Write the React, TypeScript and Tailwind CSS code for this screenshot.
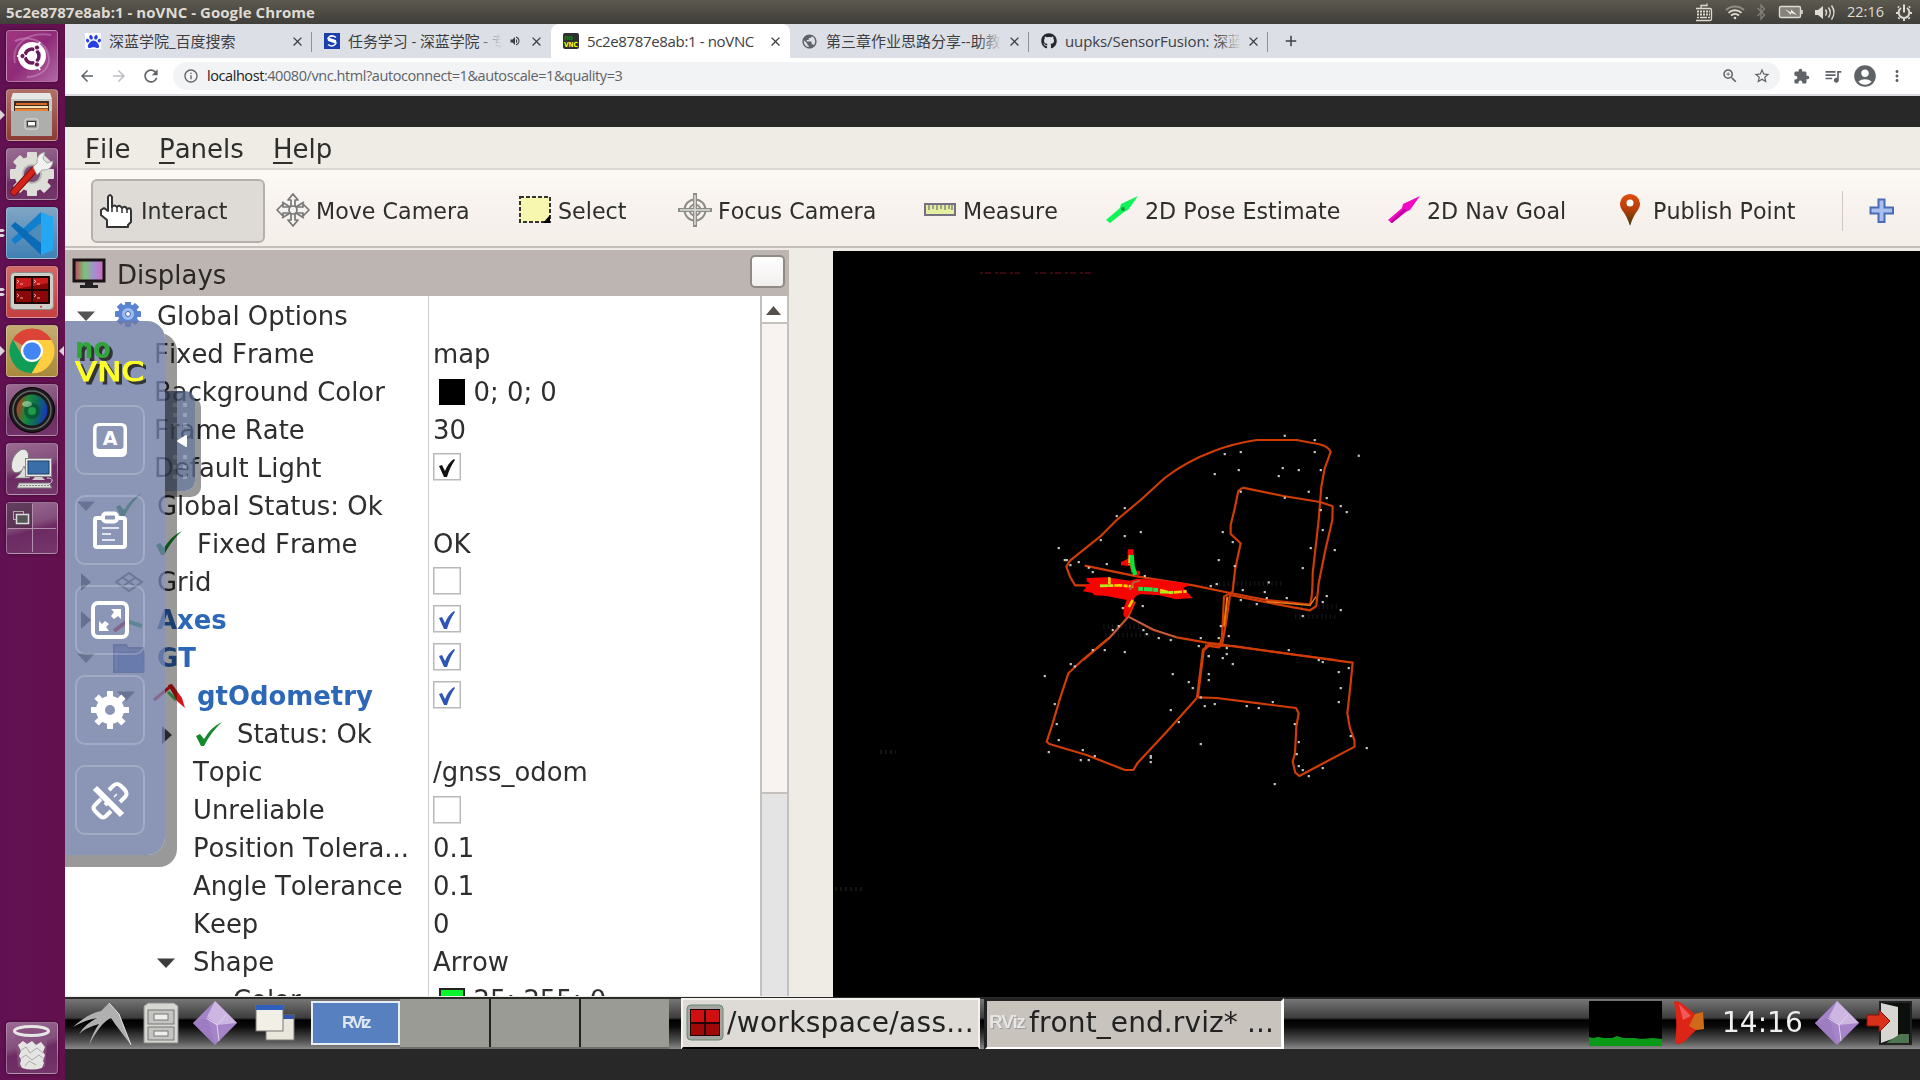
import React from "react";
import {
  MdArrowBack, MdArrowForward, MdRefresh, MdInfoOutline, MdZoomIn, MdStarBorder, MdExtension,
  MdQueueMusic, MdAccountCircle, MdMoreVert, MdClose, MdAdd, MdVolumeUp, MdPublic,
} from "react-icons/md";
import { FaGithub, FaPaw } from "react-icons/fa";

/* ---------- top panel ---------- */

function TopPanel() {
  return (
    <div className="flex h-6 shrink-0 items-center bg-gradient-to-b from-[#5c594f] to-[#3f3e39] pl-1.5 text-[#dfdbd2]">
      <span className="w-[1690px] whitespace-nowrap text-[15px] font-bold tracking-[0.05px]">5c2e8787e8ab:1 - noVNC - Google Chrome</span>
      <svg className="shrink-0" width="218" height="24" viewBox="0 0 218 24" fill="none" stroke="#dfdbd2">
        <g transform="translate(-1 0)">
          <path d="M6 8V5.500h6V3.500" strokeWidth="1.300" />
          <rect x="-.5" y="8.500" width="17" height="12" rx="1.500" strokeWidth="1.300" />
          <path d="M2 11.500h13M2 14.500h13" strokeWidth="2" strokeDasharray="2 1" />
          <path d="M2 17.500h13" strokeWidth="1.500" strokeDasharray="2 1 7 1 2 1" />
        </g>
        <path d="M30 10a13 13 0 0 1 18 0" strokeWidth="2" stroke="#8f8c84" />
        <path d="M32.500 12.800a9.500 9.500 0 0 1 13 0M35 15.500a6 6 0 0 1 8 0" strokeWidth="1.800" />
        <circle cx="39" cy="18" r="1.300" fill="#dfdbd2" stroke="none" />
        <path d="M61.500 8l7 7-3.500 4V5l3.500 4-7 7" stroke="#85827a" strokeWidth="1.300" />
        <rect x="83.500" y="6.500" width="21" height="11" rx="1.500" fill="#85827a" strokeWidth="1.400" />
        <path d="M106 10v4" strokeWidth="1.600" />
        <path d="M89 9l6 3.500 0-3 6 5.500-6-2 0 2z" fill="#eee" stroke="none" />
        <path d="M119 10h3l5-4v13l-5-4h-3z" fill="#dfdbd2" stroke="none" />
        <path d="M129.500 9.500q2 3 0 6M132.500 7.500q3.500 5 0 10M135.500 5.500q5 7 0 14" strokeWidth="1.400" />
        <g transform="translate(208 12.500)">
          <path d="M-3 -4.500a5.400 5.400 0 1 0 6 0" strokeWidth="2" />
          <path d="M0 -8v8" strokeWidth="2" />
          <path d="M-5 -5l-1 -1M5 -5l1 -1M-6 .5h-2M6 .5h2M-4.500 5l-1.200 1.200M4.500 5l1.200 1.200M0 6.500v2" strokeWidth="2" />
        </g>
      </svg>
      <span className="-ml-[67px] text-[14.500px]">22:16</span>
    </div>
  );
}

/* ---------- launcher ---------- */

type TileProps = { bg: string; left?: 0 | 1 | 2; right?: boolean; children: React.ReactNode };

function Tile({ bg, left = 0, right, children }: TileProps) {
  return (
    <div className="flex h-[52px] w-[65px] shrink-0 items-center">
      <svg width="6" height="20" viewBox="0 0 6 20" fill="#dcd3da">
        {left === 1 && <path d="M0 5l5 5-5 5z" />}
        {left === 2 && <path d="M0 6h3l2 1.500-2 1.500H0zM0 11h3l2 1.500-2 1.500H0z" />}
      </svg>
      <div className={"flex h-[52px] w-[52px] items-center justify-center rounded border border-white/30 shadow-[0_0_3px_rgba(0,0,0,0.5)] " + bg}>
        <svg width="50" height="50" viewBox="0 0 50 50">{children}</svg>
      </div>
      {right && (
        <svg width="7" height="10" viewBox="0 0 7 10" fill="#dcd3da"><path d="M6 0v10L1 5z" /></svg>
      )}
    </div>
  );
}

const plain = "bg-[linear-gradient(165deg,#9a6b93_0%,#84507c_42%,#6c2a62_55%,#74376b_100%)]";

function Launcher() {
  return (
    <div className="flex w-[65px] shrink-0 flex-col gap-[7px] bg-gradient-to-r from-[#611152] to-[#64104f] pt-1.5">
      <Tile bg="bg-gradient-to-br from-[#a0377f] via-[#8f2a78] to-[#b068a4]">
        <path d="M8 10C20 4 40 8 42 28C42 40 30 46 20 46" fill="none" stroke="#c68bbb" strokeWidth="2" opacity=".6" />
        <path d="M44 4C20 0 4 14 8 32" fill="none" stroke="#c68bbb" strokeWidth="2" opacity=".5" />
        <circle cx="25" cy="25" r="14" fill="#fff" />
        <circle cx="25" cy="25" r="7" fill="none" stroke="#6b1a5b" strokeWidth="3.500" />
        <path d="M25 25L10 25M25 25L33 11M25 25L33 39" stroke="#fff" strokeWidth="2" />
        <circle cx="15.500" cy="25" r="2.600" fill="#6b1a5b" stroke="#fff" />
        <circle cx="30" cy="16.500" r="2.600" fill="#6b1a5b" stroke="#fff" />
        <circle cx="30" cy="33.500" r="2.600" fill="#6b1a5b" stroke="#fff" />
      </Tile>
      <Tile bg="bg-gradient-to-b from-[#b0706a] to-[#8c3a35]" left={1}>
        <path d="M6 3h37l2 7v35q0 1-1 1H5q-1 0-1-1V10z" fill="#c9c9c7" />
        <path d="M6 3h37l2 6H4z" fill="#e6e6e4" />
        <rect x="7" y="11" width="35" height="11" fill="#3d2a20" />
        <path d="M9 13h31v2H9z" fill="#d9682c" />
        <path d="M8 16h33v2H8z" fill="#f6e3b0" />
        <path d="M8 18.500h33v2.500H8z" fill="#e58338" />
        <path d="M4 21h41v24q0 1-1 1H5q-1 0-1-1z" fill="#aeaeac" />
        <rect x="18" y="29" width="13" height="10" rx="2" fill="#9a9a98" stroke="#e5e5e5" />
        <rect x="20.500" y="31.500" width="8" height="4.500" fill="#fff" stroke="#333" />
      </Tile>
      <Tile bg={plain}>
        <g transform="translate(25 25)">
          <g fill="#deded9">
            {[0, 45, 90, 135].map((a) => (
              <rect key={a} x="-5" y="-22" width="10" height="44" rx="1" transform={`rotate(${a})`} />
            ))}
            <circle r="17.500" />
          </g>
          <circle r="9" fill="#7c4b75" stroke="#b5b5b0" strokeWidth="2" />
        </g>
        <path d="M7 43L27 21" stroke="#7c100b" strokeWidth="7.500" strokeLinecap="round" />
        <path d="M7 43L27 21" stroke="#d3231c" strokeWidth="5.500" strokeLinecap="round" />
        <path d="M26 18l4-4q-1-9 8-11l-2 7 4 4 6-2q-1 9-9 9l-2 0-5 5z" fill="#f1f1ef" stroke="#999" strokeWidth=".8" />
      </Tile>
      <Tile bg="bg-gradient-to-b from-[#7fa5c4] to-[#3f80b4]" left={2}>
        <path d="M34 4l12 5v33l-12 5z" fill="#24a7f2" />
        <path d="M34 4v12L8 36l-4-4z" fill="#0f7fce" />
        <path d="M34 47V34L8 14l-4 4z" fill="#0a6bb8" />
        <path d="M34 15v20L21 25z" fill="#4e8bb9" />
      </Tile>
      <Tile bg="bg-gradient-to-b from-[#d06a68] to-[#c23f3f]" left={2}>
        <rect x="3.500" y="5.500" width="43" height="37" rx="4" fill="#cfcdc8" stroke="#8b8984" />
        <rect x="7" y="9" width="36" height="28" rx="1" fill="#1c0505" />
        <path d="M9 11h15v11H9zM26 11h15v11H26zM9 24h15v11H9zM26 24h15v11H26z" fill="#8a0808" />
        <path d="M9 11h15v8L9 22zM26 11h15v5l-15 3z" fill="#c81c1c" />
        <path d="M10 13l2 1.500-2 1.500M13 17h3M27 13l2 1.500-2 1.500M30 17h3M10 27l2 1.500-2 1.500M13 31h3M27 27l2 1.500-2 1.500M30 31h3" stroke="#fff" fill="none" strokeWidth=".8" opacity=".85" />
        <circle cx="34" cy="39.800" r="1" fill="#e22" />
      </Tile>
      <Tile bg="bg-gradient-to-b from-[#c3ab72] to-[#a8893a]" left={1} right>
        <path d="M25 25L5.800 13.500A22.300 22.300 0 0 1 44.500 14L25 14z" fill="#db4437" />
        <path d="M25 25V14H44.500A22.300 22.300 0 0 1 24.500 47.300L34.500 30.500z" fill="#ffcd40" />
        <path d="M25 25L34.500 30.500L24.500 47.300A22.300 22.300 0 0 1 5.800 13.500L15.500 30.500z" fill="#0f9d58" />
        <circle cx="25" cy="25" r="11" fill="#fff" />
        <circle cx="25" cy="25" r="8.800" fill="#4285f4" />
      </Tile>
      <Tile bg={plain}>
        <defs>
          <linearGradient id="lens" x1="0" x2="1" y1="0.200" y2=".4">
            <stop offset="0" stopColor="#c7301c" /><stop offset=".35" stopColor="#1c8a3e" />
            <stop offset=".65" stopColor="#0e6e52" /><stop offset="1" stopColor="#1838b8" />
          </linearGradient>
        </defs>
        <circle cx="25" cy="25" r="22.500" fill="#1b1b1b" stroke="#000" />
        <circle cx="25" cy="25" r="19" fill="none" stroke="#666" strokeWidth="1.500" />
        <circle cx="25" cy="25" r="15.500" fill="url(#lens)" />
        <circle cx="25" cy="26" r="8" fill="#06502e" opacity=".7" />
        <circle cx="25" cy="26" r="4" fill="#1e9a4a" />
        <ellipse cx="20" cy="19" rx="5" ry="3" fill="#d7f5c9" opacity=".5" />
      </Tile>
      <Tile bg={plain}>
        <ellipse cx="13" cy="17" rx="7.500" ry="12.500" transform="rotate(25 13 17)" fill="#e8e8e4" stroke="#777" />
        <path d="M8 34h15l-3-4-3-8-4 8z" fill="#ddd" stroke="#777" strokeWidth=".7" />
        <rect x="18.500" y="14.500" width="26" height="18" fill="#e8e8e4" stroke="#888" />
        <rect x="21" y="17" width="21" height="13" fill="#3a6ea8" stroke="#1d3f6a" />
        <path d="M28 33h7l3 3H25z" fill="#ccc" />
        <path d="M12 39h30l3 5H10z" fill="#dedeDA" stroke="#777" />
        <path d="M13 41.500h30" stroke="#888" strokeDasharray="2 1" />
        <path d="M40 34q6 0 5 3t-4 3" stroke="#ccc" fill="none" />
      </Tile>
      <Tile bg={plain}>
        <path d="M0 0h25v25H0z" fill="#40203b" opacity=".6" />
        <path d="M25.500 1v48M1 25.500h48" stroke="#b490ae" strokeWidth="1" />
        <rect x="6.500" y="8.500" width="10" height="8" fill="none" stroke="#aaa" />
        <rect x="9.500" y="11.500" width="12" height="9" fill="#555" stroke="#ddd" strokeWidth="1.500" />
      </Tile>
      <div className="mt-auto pb-1.5">
        <Tile bg={plain}>
          <path d="M8 8h33l-3 36q-13 4-27 0z" fill="#8a5585" opacity=".7" />
          <path d="M11 22l5-4 4 3 5-3 4 4 5-3 4 5-2 5 2 3-2 6 1 2-2 5q-10 3-20 0l-2-4 1-4-2-4 2-5z" fill="#e4e4e2" />
          <path d="M13 28l6-4 4 6 7-5 6 5M13 36l6-4 6 5 7-5 5 4M18 43l4-5 7 4" stroke="#aaa" fill="none" />
          <ellipse cx="24.500" cy="8" rx="17" ry="4.500" fill="#884f80" stroke="#e6e6e4" strokeWidth="3" />
        </Tile>
      </div>
    </div>
  );
}

/* ---------- chrome ---------- */

type TabProps = { icon: React.ReactNode; title: string; fade?: boolean; sound?: boolean; active?: boolean; sep?: boolean; track?: string };

function Tab({ icon, title, fade, sound, active, sep, track = "" }: TabProps) {
  return (
    <div className={"relative flex h-[34px] w-[239px] shrink-0 items-center pl-3 " + (active ? "rounded-t-lg bg-white" : "")}>
      <div className="flex w-6 shrink-0">{icon}</div>
      <div className={"relative h-6 overflow-hidden whitespace-nowrap text-[15px] leading-6 text-[#3c4043] " + (sound ? "w-[154px] " : "w-[176px] ") + track}>
        {title}
        {fade && <div className="absolute inset-y-0 right-0 w-6 bg-gradient-to-r from-transparent to-[#dddfe6]" />}
      </div>
      {sound && <MdVolumeUp className="ml-[7px] mr-[3px] h-3 w-3 text-[#3c4043]" />}
      <MdClose className="ml-[5px] h-[15px] w-[15px] text-[#3c4043]" />
      {sep && <div className="absolute right-0 top-2 h-5 w-px bg-[#8f9299]" />}
    </div>
  );
}

function Tabs() {
  return (
    <div className="flex h-[34px] shrink-0 bg-[#dddfe6] pl-2">
      <Tab sep title="深蓝学院_百度搜索" icon={<div className="flex h-4 w-4 items-center justify-center bg-white"><FaPaw className="h-[15px] w-[15px] text-[#2a3fe0]" /></div>} />
      <Tab fade sound track="tracking-[-0.1px]" title="任务学习 - 深蓝学院 - 专" icon={
        <svg width="16" height="16" viewBox="0 0 16 16">
          <rect width="16" height="16" fill="#1c3fae" />
          <path d="M12 4.500Q8 1.500 5 4T8 7.500T11 11.500T4 11.500M4 7l8 3M5 5.500l7 2.500" stroke="#fff" fill="none" strokeWidth="1.500" />
        </svg>} />
      <Tab active track="tracking-[-0.35px]" title="5c2e8787e8ab:1 - noVNC" icon={
        <svg width="16" height="16" viewBox="0 0 16 16">
          <rect width="16" height="16" rx="2" fill="#303030" />
          <text x="1" y="7" fontSize="7" fontWeight="bold" fill="#0a8a0a" fontFamily="DejaVu Sans" textLength="9">no</text>
          <text x="1" y="13.500" fontSize="7" fontWeight="bold" fill="#ff0" fontFamily="DejaVu Sans" textLength="14" lengthAdjust="spacingAndGlyphs">VNC</text>
        </svg>} />
      <Tab fade sep title="第三章作业思路分享--助教" icon={<MdPublic className="-ml-px h-[17px] w-[17px] text-[#5f6368]" />} />
      <Tab fade sep track="tracking-[-0.1px]" title="uupks/SensorFusion: 深蓝" icon={<FaGithub className="h-4 w-4 text-[#24292e]" />} />
      <MdAdd className="ml-[14px] mt-2 h-[18px] w-[18px] text-[#3c4043]" />
    </div>
  );
}

function AddressBar() {
  return (
    <div className="flex h-[38px] shrink-0 items-center border-b-2 border-[#dadce0] bg-white pl-[13px] text-[#5f6368]">
      <MdArrowBack className="h-[18px] w-[18px]" />
      <MdArrowForward className="ml-[14px] h-[18px] w-[18px] text-[#bcbec2]" />
      <MdRefresh className="ml-[13px] h-5 w-5" />
      <div className="ml-3 flex h-7 w-[1607px] items-center rounded-full bg-[#f1f3f4] pl-2.5">
        <MdInfoOutline className="h-4 w-4" />
        <span className="ml-2 whitespace-nowrap text-[14.500px] tracking-[-0.43px] text-[#5f6368]">
          <span className="text-[#202124]">localhost</span>:40080/vnc.html?autoconnect=1&amp;autoscale=1&amp;quality=3
        </span>
        <MdZoomIn className="ml-auto h-[18px] w-[18px]" />
        <MdStarBorder className="ml-[14px] mr-[9px] h-[18px] w-[18px]" />
      </div>
      <MdExtension className="ml-[13px] h-[17px] w-[17px]" />
      <MdQueueMusic className="ml-[13px] h-5 w-5" />
      <MdAccountCircle className="ml-[9px] h-[26px] w-[26px]" />
      <MdMoreVert className="ml-2.5 h-[18px] w-[18px]" />
    </div>
  );
}

/* ---------- rviz ---------- */

function MenuBar() {
  return (
    <div className="flex h-[43px] shrink-0 border-b-2 border-[#dcd8d3] bg-[#efebe5] pl-5 text-[26px] leading-[44px] text-[#2e2e2c]">
      <span className="w-[74px]"><u className="decoration-2 underline-offset-4">F</u>ile</span>
      <span className="w-[114px]"><u className="decoration-2 underline-offset-4">P</u>anels</span>
      <span><u className="decoration-2 underline-offset-4">H</u>elp</span>
    </div>
  );
}

function Tool({ w, icon, label }: { w: string; icon: React.ReactNode; label: string }) {
  return (
    <div className={"flex shrink-0 items-center whitespace-nowrap " + w}>
      <svg className="mr-1.5 shrink-0" width="34" height="34" viewBox="0 0 34 34">{icon}</svg>
      <span className="pt-0.5">{label}</span>
    </div>
  );
}

function ToolBar() {
  return (
    <div className="flex h-[78px] shrink-0 items-center border-b-2 border-[#c4bfba] bg-gradient-to-b from-[#fdf9f5] via-[#f7f2ee] to-[#f5efea] pl-[26px] pt-[5px] text-[22.200px] text-[#2e2e2c]">
      <div className="mr-[11px] flex h-16 w-[174px] items-center rounded-md border-2 border-[#b5b0ab] bg-[#dedad5] pl-1.5">
        <svg width="34" height="36" viewBox="0 0 34 36">
          <path d="M8 33V27L2 22V17L5 15L9 18V4Q11 0 13 4V14Q15 11 18 14Q20 11 23 15Q26 12 28 16Q32 14 32 18V29L29 32V34H8z" fill="#fff" stroke="#333" strokeWidth="2" strokeLinejoin="round" />
          <path d="M13 14v5M18 14v5M23 15v5M28 16v4" stroke="#333" strokeWidth="1.500" />
        </svg>
        <span className="ml-2 pt-0.5">Interact</span>
      </div>
      <Tool w="w-[242px]" label="Move Camera" icon={
        <g fill="#f4f2ee" stroke="#777" strokeWidth="1.700" strokeLinejoin="round">
          <path d="M17 1l5 6h-3v7h8v-3l6 6-6 6v-3h-8v7h3l-5 6-5-6h3v-7H7v3l-6-6 6-6v3h8V7h-3z" />
          <path d="M6 9l8 5M28 9l-8 5M6 25l8-5M28 25l-8-5" />
          <circle cx="17" cy="17" r="4" />
        </g>} />
      <Tool w="w-[160px]" label="Select" icon={
        <g>
          <rect x="2" y="4" width="30" height="25" fill="#f7f7b0" stroke="#333" strokeWidth="2" strokeDasharray="4 2" />
          <path d="M32 22v8h-7z" fill="#000" />
        </g>} />
      <Tool w="w-[245px]" label="Focus Camera" icon={
        <g fill="none" stroke="#8f8d88" strokeWidth="2">
          <circle cx="17" cy="17" r="10.500" /><circle cx="17" cy="17" r="5.500" />
          <path d="M17 0v34M0 17h34" strokeWidth="4" /><path d="M17 2v30M2 17h30" stroke="#ddd" strokeWidth="1.500" />
        </g>} />
      <Tool w="w-[182px]" label="Measure" icon={
        <g>
          <rect x="2" y="11" width="30" height="11" fill="#e5efa2" stroke="#777080" strokeWidth="2" />
          <path d="M6 12v5M10 12v4M14 12v5M18 12v4M22 12v5M26 12v4M29 12v5" stroke="#777" strokeWidth="1.300" />
        </g>} />
      <Tool w="w-[282px]" label="2D Pose Estimate" icon={
        <g><path d="M1 27L15 15L16 11L33 3L23 17L19 19L5 30z" fill="#10f458" /><circle cx="18" cy="16" r="2" fill="#0a9c3c" /></g>} />
      <Tool w="w-[226px]" label="2D Nav Goal" icon={
        <g><path d="M1 27L15 15L16 11L33 3L23 17L19 19L5 30z" fill="#f408c8" /><path d="M3 29L17 16L20 17L5 30z" fill="#b8009a" /></g>} />
      <Tool w="w-[229px]" label="Publish Point" icon={
        <g>
          <defs><linearGradient id="pin" x1="0" x2="0" y1="0" y2="1"><stop offset="0" stopColor="#e04e10" /><stop offset=".5" stopColor="#b33c08" /><stop offset="1" stopColor="#3c3a08" /></linearGradient></defs>
          <path d="M17 33Q14 23 9 17A10 10 0 1 1 25 17Q20 23 17 33z" fill="url(#pin)" /><circle cx="17" cy="10" r="3.500" fill="#fff" />
        </g>} />
      <div className="h-10 w-px bg-[#cfc9c4]" />
      <svg className="ml-[26px]" width="26" height="26" viewBox="0 0 26 26">
        <path d="M9.500 1.500h6v8h8.500v6h-8.500v8.500h-6v-8.500H1.500v-6h8z" fill="#a9bff0" stroke="#4a6cb4" strokeWidth="2" />
      </svg>
    </div>
  );
}

const Down = ({ dark }: { dark?: boolean }) => (
  <svg className="shrink-0" width="18" height="38" viewBox="0 0 18 38"><path d="M0 14.500h18L9 24z" fill={dark ? "#3c3c3c" : "#555"} /></svg>
);
const Right = () => (
  <svg className="ml-1 shrink-0" width="14" height="38" viewBox="0 0 14 38"><path d="M0 10v18l10-9z" fill="#444" /></svg>
);
const Check = () => (
  <svg className="shrink-0" width="28" height="38" viewBox="0 0 28 38"><path d="M1 20l4-2 4 5Q16 11 27 6Q16 16 9 30H6z" fill="#138a2b" /></svg>
);

function Box({ on, blue }: { on?: boolean; blue?: boolean }) {
  return (
    <svg className="-mt-0.5" width="28" height="28" viewBox="0 0 28 28">
      <rect x=".75" y=".75" width="26.500" height="26" fill="#fff" stroke="#b9b9b9" strokeWidth="1.500" />
      {on && <path d="M6 13l3-1 3 6q3-8 9-12l1 1q-5 7-8 17h-3z" fill={blue ? "#2f55b4" : "#111"} />}
    </svg>
  );
}

type RowProps = { lead?: React.ReactNode; pad: string; label: string; bold?: boolean; value?: React.ReactNode };

function Row({ lead, pad, label, bold, value }: RowProps) {
  return (
    <div className="flex h-[38.050px] shrink-0 items-center whitespace-nowrap">
      <div className={"flex shrink-0 items-center " + pad}>{lead}</div>
      <div className="flex-1"><span className={bold ? "font-bold text-[#2d68b8]" : ""}>{label}</span></div>
      <div className="flex w-[327px] items-center">{value}</div>
    </div>
  );
}

function Displays() {
  return (
    <div className="flex w-[724px] shrink-0 flex-col text-[25.900px] text-[#2e2e2e]">
      <div className="flex h-[46px] shrink-0 items-center bg-[#bdb5b2] pl-[7px] pr-1 text-[26px] text-[#2b2725]">
        <svg className="shrink-0" width="34" height="34" viewBox="0 0 34 34">
          <defs><linearGradient id="mon"><stop offset="0" stopColor="#c2405c" /><stop offset=".35" stopColor="#7cc278" /><stop offset=".7" stopColor="#a98ad8" /><stop offset="1" stopColor="#d06ab0" /></linearGradient></defs>
          <rect x="2" y="4" width="30" height="21" fill="url(#mon)" stroke="#1c1216" strokeWidth="3" />
          <path d="M13 25h8v4h5v3H8v-3h5z" fill="#222" />
        </svg>
        <span className="ml-[11px] pt-1">Displays</span>
        <div className="mb-1 ml-auto h-[33px] w-[35px] rounded-[5px] border-2 border-[#8f8b84] bg-gradient-to-b from-white to-[#f2eeee]" />
      </div>
      <div className="flex h-[700px] overflow-hidden bg-white">
        <div className="relative flex w-[695px] flex-col overflow-hidden pt-px">
          <div className="absolute left-[363px] top-0 h-full w-px bg-[#cfcfcf]" />
          <Row pad="w-[92px] pl-3" lead={<><Down /><svg className="ml-[19px]" width="28" height="28" viewBox="0 0 28 28"><g transform="translate(14 12)"><g fill="#5a83d2">{[0, 45, 90, 135].map((a) => <rect key={a} x="-3" y="-13" width="6" height="26" rx="1" transform={`rotate(${a})`} />)}<circle r="10" /></g><circle r="6" fill="#9dbcf0" /><circle r="2.500" fill="#fff" stroke="#3c62b0" /></g></svg></>} label="Global Options" />
          <Row pad="w-[89px]" label="Fixed Frame" value="map" />
          <Row pad="w-[89px]" label="Background Color" value={<><div className="ml-[5.500px] mr-[9px] h-[26px] w-[26px] bg-black" />0; 0; 0</>} />
          <Row pad="w-[89px]" label="Frame Rate" value="30" />
          <Row pad="w-[89px]" label="Default Light" value={<Box on />} />
          <Row pad="w-[92px] pl-3" lead={<><Down /><div className="ml-5"><Check /></div></>} label="Global Status: Ok" />
          <Row pad="w-[132px] pl-[90px]" lead={<Check />} label="Fixed Frame" value="OK" />
          <Row pad="w-[92px] pl-3" lead={<><Right /><svg className="ml-5" width="28" height="20" viewBox="0 0 28 20"><path d="M14 1l13 9-13 9L1 10zM7.500 5.500l13 9M20.500 5.500l-13 9" fill="none" stroke="#666" strokeWidth="2" /></svg></>} label="Grid" value={<Box />} />
          <Row pad="w-[92px] pl-3" bold lead={<><Right /><svg className="ml-4" width="32" height="30" viewBox="0 0 32 30"><path d="M15 17V2" stroke="#c9f" strokeWidth="3" /><path d="M15 17L3 26" stroke="#c12" strokeWidth="4" /><path d="M15 16l16 5" stroke="#1b5" strokeWidth="4" /></svg></>} label="Axes" value={<Box on blue />} />
          <Row pad="w-[92px] pl-3" bold lead={<><Down /><svg className="ml-[18px]" width="32" height="30" viewBox="0 0 32 30"><path d="M1 29V2h12l2 3h15v24z" fill="#7d8fc0" stroke="#56659a" strokeWidth="2" /><path d="M5 29V9h26v20z" fill="#5578c8" stroke="#56659a" /></svg></>} label="GT" value={<Box on blue />} />
          <Row pad="w-[132px] pl-[52px]" bold lead={<><Down /><svg className="ml-[18px]" width="34" height="26" viewBox="0 0 34 26"><path d="M1 17L18 3" stroke="#e02020" strokeWidth="3" /><path d="M15 9l8 8" stroke="#4c6" strokeWidth="3" /><path d="M15 2l4-1 10 14 3 10-8-7z" fill="#d81414" /></svg></>} label="gtOdometry" value={<Box on blue />} />
          <Row pad="w-[172px] pl-[93px]" lead={<><Right /><div className="ml-[19px]"><Check /></div></>} label="Status: Ok" />
          <Row pad="w-[128px]" label="Topic" value="/gnss_odom" />
          <Row pad="w-[128px]" label="Unreliable" value={<Box />} />
          <Row pad="w-[128px]" label="Position Tolera..." value="0.1" />
          <Row pad="w-[128px]" label="Angle Tolerance" value="0.1" />
          <Row pad="w-[128px]" label="Keep" value="0" />
          <Row pad="w-[128px] pl-[92px]" lead={<Down dark />} label="Shape" value="Arrow" />
          <Row pad="w-[168px]" label="Color" value={<><div className="ml-[5.500px] mr-[9px] h-[26px] w-[26px] border-2 border-[#222] bg-[#0af52c]" />25; 255; 0</>} />
        </div>
        <div className="flex w-[29px] flex-col border-x-2 border-[#c4c0bc]">
          <div className="flex h-[28px] shrink-0 items-center justify-center border-b-2 border-[#c4c0bc] pr-0.5 pt-0.5"><svg width="15" height="9" viewBox="0 0 15 9"><path d="M0 9L7.500 0L15 9z" fill="#55504b" /></svg></div>
          <div className="h-[470px] shrink-0 border-b-2 border-[#c4c0bc] bg-[#f8f3f1]" />
          <div className="flex-1 bg-[#e4e4e4]" />
        </div>
      </div>
    </div>
  );
}

const starsUpper = [[794, 47], [884, 60], [884, 96], [662, 96], [614, 102], [1016, 107], [656, 150], [584, 162], [788, 144], [776, 168], [836, 150], [902, 150], [662, 215], [866, 215], [794, 233], [920, 234], [962, 258], [980, 276], [902, 270], [314, 264], [290, 288], [362, 336], [314, 348], [242, 360], [608, 336], [638, 366], [908, 330], [872, 384], [944, 390], [116, 384], [134, 420], [140, 420], [151, 435], [176, 426], [206, 443], [218, 456], [260, 432], [596, 420], [644, 438], [848, 444], [374, 468], [572, 498], [590, 492], [746, 487], [668, 510], [734, 516], [740, 534], [662, 540], [710, 552], [800, 534], [920, 528], [908, 546], [962, 570], [848, 588], [368, 558], [308, 564], [278, 630], [296, 618], [370, 630], [380, 642], [416, 654], [452, 660], [542, 654], [536, 678], [596, 654], [602, 618], [626, 648], [218, 690], [254, 690], [314, 696], [566, 708], [620, 684], [620, 702], [608, 714], [806, 690]];
const starsLower = [[74, 228], [152, 192], [164, 199], [104, 312], [110, 372], [116, 420], [86, 456], [182, 480], [206, 480], [188, 450], [224, 468], [392, 468], [392, 473], [392, 486], [452, 330], [476, 366], [458, 222], [506, 246], [518, 264], [542, 292], [554, 318], [584, 312], [566, 168], [566, 222], [566, 240], [638, 192], [680, 318], [716, 324], [758, 306], [896, 180], [908, 186], [986, 204], [956, 216], [962, 264], [956, 306], [992, 408], [1040, 444], [824, 372], [836, 426], [830, 462], [836, 498], [848, 510], [866, 528], [908, 504], [764, 552], [542, 432]];

function Viewport() {
  return (
    <svg className="shrink-0" width="1087" height="748" viewBox="833 250 1087 748">
      <rect x="833" y="251" width="1087" height="747" fill="#000" />
      <path d="M980 273h40M1035 273h60" stroke="#3a0610" strokeWidth="2" strokeDasharray="3 2 6 4" />
      <path d="M835 889h30M880 752h16" stroke="#151515" strokeWidth="4" strokeDasharray="2 3" />
      <g transform="translate(1020 420) scale(.33333)" fill="none" stroke="#d13c04" strokeWidth="6.500" strokeLinejoin="round">
        <path d="M640 490L536 500M650 490H790M830 560h130M825 590h130M250 620h110M255 645h150" stroke="#141414" strokeDasharray="4 9" strokeWidth="14" />
        <path d="M194 437L355 470L520 496L615 516L740 540L870 554Q878 530 878 460L896 300L904 200L914 145L932 96Q925 78 895 72Q860 66 830 60H710Q640 70 580 94Q500 124 434 174L362 240L290 300L240 350L150 422L139 440L150 470L165 496H210" />
        <path d="M668 203L655 213L643 270L632 315V342L662 370L645 450L638 515L612 530L606 650L598 682L555 676" />
        <path d="M668 203L790 228L900 246L938 259L937 300L916 390L896 490L889 558L870 571L820 562L730 545L630 525L618 610L606 675" />
        <path d="M190 720L270 652L325 590L345 545M325 590L400 630L470 652L560 668L720 690L945 720" />
        <path d="M225 690L270 652L325 590L400 628L470 652" stroke="#b5644e" strokeWidth="4" />
        <path d="M740 545L870 556L888 530" stroke="#e58020" strokeWidth="4" />
        <path d="M622 530L612 620" stroke="#ef7a08" strokeWidth="6" />
      </g>
      <g transform="translate(1020 600) scale(.33333)" fill="none" stroke="#d13c04" strokeWidth="6.500" strokeLinejoin="round">
        <path d="M265 115L190 178L145 220L120 295L98 370L80 425L88 432L200 465L315 510H340L352 490L440 395L530 295" />
        <path d="M602 133L570 133L550 150L540 230L532 295" strokeWidth="9" />
        <path d="M535 292L590 294L700 308L828 324L836 340L829 380L825 460L818 485L826 518L838 528L900 495L1004 440L1003 420L990 385L982 340L991 260L998 188L975 185L830 165L640 138L600 137" />
      </g>
      <g transform="translate(1020 420) scale(.33333)">
        <path d="M323 388h17v14l-6 16 6 30-6 14-4-24-27-2v-10l20-10z" fill="#f80400" />
        <path d="M200 474l60-2 70 10 20-6 70 4 70 8 20 8-20 8 20 22 8 8-50 4-50-12-60-4-14 10-6 26-10 20-10 18-8-10 2-24 8-22-60-12-36-2-8-8-28-4 10-10-8-6 20-8-10-6z" fill="#f80400" />
        <path d="M345 452l14 0 2 10-10 8-10-6z" fill="#f80400" />
        <path d="M240 498L300 496L340 500M420 510L450 518L500 514M338 540l-12 22M268 472v20M330 405l-2 30" stroke="#f2d000" strokeWidth="8" fill="none" strokeDasharray="24 4 12 3" />
        <path d="M335 405L338 440L346 465" stroke="#06e63a" strokeWidth="13" fill="none" />
        <path d="M355 506L415 510" stroke="#22e050" strokeWidth="12" fill="none" strokeDasharray="14 3 26 2" />
        <path d="M240 497h36M420 517h40" stroke="#a8ee20" strokeWidth="7" fill="none" />
        <path d="M330 510l10-22 20-6" stroke="#b0604a" strokeWidth="6" fill="none" />
      </g>
      <g fill="#c4c4c4">
        {starsUpper.map(([x, y], i) => <rect key={i} x={1019 + x / 3} y={419 + y / 3} width="2.200" height="2.200" />)}
        {starsLower.map(([x, y], i) => <rect key={i} x={1019 + x / 3} y={599 + y / 3} width="2.200" height="2.200" />)}
      </g>
    </svg>
  );
}

/* ---------- remote desktop task bar ---------- */

const Gem = ({ cls }: { cls: string }) => (
  <svg className={"shrink-0 " + cls} width="46" height="44" viewBox="0 0 46 44">
    <path d="M23 0L45 22L23 44L1 22z" fill="#a684c9" />
    <path d="M23 0L45 22L25 24L15 16z" fill="#cdb6e2" />
    <path d="M1 22L15 16L23 44z" fill="#9d7cc2" />
    <path d="M25 24L27 40M25 24L14 17M25 24L34 14" stroke="#e1d3ef" fill="none" />
  </svg>
);

function TaskBar() {
  return (
    <div className="flex h-[52px] shrink-0 items-center border-t-2 border-[#2a2a2a] bg-[linear-gradient(#767676,#3c3c3c_38%,#000_42%,#0a0a0a_55%,#555_85%,#8a8a8a)] pb-0.5 text-[28px] text-[#222]">
      <svg className="ml-1.5 shrink-0" width="62" height="46" viewBox="0 0 62 46">
        <path d="M38 3L48 14L60 45L44 24L40 18Q30 22 18 45Q22 32 28 24Q14 28 8 34Q14 24 26 18Q14 20 2 27Q16 14 30 11z" fill="#b0b0b0" />
        <path d="M38 3L48 14L60 45" stroke="#e2e2e2" fill="none" />
      </svg>
      <svg className="ml-[9px] shrink-0" width="38" height="42" viewBox="0 0 38 42">
        <path d="M2 4l4-3h26l4 3v37H2z" fill="#d6d6d2" stroke="#8c8c88" />
        <rect x="6" y="8" width="26" height="14" fill="#c4c4c0" stroke="#777" /><rect x="6" y="25" width="26" height="13" fill="#c4c4c0" stroke="#777" />
        <rect x="12" y="12" width="14" height="6" fill="#eee" stroke="#777" /><rect x="12" y="29" width="14" height="5" fill="#eee" stroke="#777" />
      </svg>
      <Gem cls="ml-3" />
      <svg className="ml-[17px] shrink-0" width="40" height="38" viewBox="0 0 40 38">
        <rect x="11" y="11" width="28" height="25" fill="#e9e7dc" stroke="#777" /><path d="M11 11h28v4H11z" fill="#2f55b0" />
        <rect x="1" y="1" width="27" height="26" fill="#f2f0e6" stroke="#777" /><path d="M1 1h27v5H1z" fill="#2f5fbe" />
      </svg>
      <div className="ml-4 flex h-[44px] w-[89px] shrink-0 items-center justify-center border-2 border-[#e8eef6] bg-[#5680bf] font-['Liberation_Sans'] text-[17px] font-bold text-white/80"><span className="tracking-[-2.5px]">RViz</span></div>
      <div className="-mb-0.5 flex h-[50px] w-[269px] shrink-0 border-b-2 border-[#6e6e6a] bg-[#9a9b94]">
        <div className="w-[91px] border-r-2 border-[#222]" />
        <div className="w-[90px] border-r-2 border-[#222]" />
      </div>
      <div className="-mb-0.5 ml-3 flex h-[52px] w-[299px] shrink-0 items-center overflow-hidden whitespace-nowrap border-2 border-b-[3px] border-[#f4f2ef] border-b-black bg-[#dedad5] pb-0.5 pl-[3px]">
        <svg className="shrink-0" width="38" height="38" viewBox="0 0 38 38">
          <rect x="1" y="1" width="36" height="35" rx="4" fill="#a3a5a0" stroke="#687" />
          <rect x="4" y="5" width="30" height="27" fill="#230404" />
          <path d="M5 6h13v12H5zM20 6h13v12H20z" fill="#d01010" /><path d="M5 20h13v11H5zM20 20h13v11H20z" fill="#a00808" />
        </svg>
        <span className="ml-[3px] tracking-[0.3px]">/workspace/ass...</span>
      </div>
      <div className="-mb-0.5 ml-[4px] flex h-[52px] w-[300px] shrink-0 items-center overflow-hidden whitespace-nowrap border-[3px] border-[#fff] border-l-[#222] border-t-[#222] bg-[#c8c3bd] pb-[3px] pl-0.5">
        <span className="w-10 font-['Liberation_Sans'] text-[19px] font-bold tracking-[-1.500px] text-[#e8e6e4] [text-shadow:1px_1px_1px_#999]">RViz</span>
        <span className="tracking-[0.100px]">front_end.rviz* ...</span>
      </div>
      <svg className="ml-[305px] shrink-0" width="73" height="45" viewBox="0 0 73 45">
        <path d="M0 0h73v45H0z" fill="#000" />
        <path d="M0 36l4 1 5-1 6 1 8 0 5-2 6 2 12 0 6 1 12-1 9 1v7l-30 2-43-2z" fill="#0a9a18" />
      </svg>
      <svg className="ml-[9px] shrink-0" width="36" height="46" viewBox="0 0 36 46">
        <path d="M3 2Q6 0 10 3L24 14L32 12L33 29L25 30L13 42Q6 46 4 42Q7 22 3 2z" fill="#dc2417" />
        <path d="M24 14L32 12L33 29L25 30L18 26z" fill="#cf6a18" />
        <path d="M8 4L20 16L12 20z" fill="#f0585a" />
      </svg>
      <span className="ml-[15px] w-[83px] text-[#efefef]">14:16</span>
      <Gem cls="ml-[9px]" />
      <svg className="ml-1.5 shrink-0" width="46" height="44" viewBox="0 0 46 44">
        <rect x="14" y="1" width="31" height="42" fill="#0c100c" stroke="#222" strokeWidth="2" />
        <path d="M15 2l17 4v30l-17 6z" fill="#d8d6d2" /><path d="M20 42l14-9h9v9z" fill="#4d7550" />
        <path d="M1 14h12V9l11 11-11 11v-6H1z" fill="#d9301a" stroke="#801408" />
      </svg>
    </div>
  );
}

/* ---------- noVNC control bar ---------- */

function Btn({ children }: { children: React.ReactNode }) {
  return (
    <div className="flex h-[70px] w-[70px] items-center justify-center rounded-[10px] border-2 border-white/20">
      <svg width="40" height="40" viewBox="0 0 40 40">{children}</svg>
    </div>
  );
}

function ControlBar() {
  return (
    <div className="absolute left-0 top-[297px] h-[534px] w-[100px] [clip-path:inset(0_-40px_-14px_0)]">
      <div className="absolute left-[90px] top-[70px] h-[100px] w-10 rounded-r-[10px] bg-[rgba(83,99,132,0.8)] shadow-[6px_6px_0_rgba(0,0,0,0.4)] [clip-path:inset(0_-10px_-10px_10px)]">
        <svg width="40" height="100" viewBox="0 0 40 100">
          <g fill="#fff" opacity=".25">
            {[12, 22, 32, 64, 74, 84].map((y) => <path key={y} d={`M18 ${y}h4v4h-4zM28 ${y}h4v4h-4z`} />)}
          </g>
        </svg>
      </div>
      <div className="absolute inset-y-0 -left-5 right-0 flex flex-col gap-5 rounded-r-[18px] bg-[rgba(110,124,165,0.8)] pl-[30px] pt-[17px] shadow-[12px_12px_0_rgba(0,0,0,0.4)]">
        <div className="-mb-[17px] flex h-16 shrink-0 flex-col drop-shadow-[3px_3px_0_#333]">
          <svg className="shrink-0" width="84" height="23" viewBox="0 0 84 23" fontFamily="DejaVu Sans" fontWeight="bold">
            <text x="0" y="20" fontSize="29" fill="#2fa53a" textLength="36" lengthAdjust="spacingAndGlyphs">no</text>
          </svg>
          <svg className="shrink-0" width="84" height="24" viewBox="0 0 84 24" fontFamily="DejaVu Sans">
            <text x="0" y="19.500" fontSize="26" fill="#ffff28" stroke="#ffff28" strokeWidth="1" textLength="69" lengthAdjust="spacingAndGlyphs">VNC</text>
          </svg>
        </div>
        <Btn>
          <path fillRule="evenodd" d="M9 3h22q6 0 6 6v22q0 6-6 6H9q-6 0-6-6V9q0-6 6-6zM9 6Q6.500 6 6.500 9v17q0 3 3 3h21q3 0 3-3V9q0-3-3-3z" fill="#fff" />
          <text x="20" y="25" fontSize="19" fontWeight="bold" textAnchor="middle" fill="#fff" fontFamily="DejaVu Sans">A</text>
        </Btn>
        <Btn>
          <rect x="5" y="8" width="30" height="29" rx="2" fill="none" stroke="#fff" strokeWidth="4" />
          <rect x="13" y="3.500" width="14" height="8" rx="3" fill="#8b96b7" stroke="#fff" strokeWidth="4" />
          <path d="M12 18h17M12 24h9M12 30h13" stroke="#fff" strokeWidth="2" opacity=".75" />
        </Btn>
        <Btn>
          <rect x="3" y="3" width="34" height="34" rx="5" fill="none" stroke="#fff" strokeWidth="4" />
          <path d="M21 9h10v10l-3-3-4 3-3-3 3-4zM9 31V21l3 3 3-3 4 3-3 3 3 4z" fill="#fff" />
        </Btn>
        <Btn>
          <g transform="translate(20 20)" fill="#fff">
            {[0, 45, 90, 135].map((a) => <path key={a} d="M-3 -19h6v38h-6z" transform={`rotate(${a})`} />)}
            <circle r="14" /><circle r="5" fill="#8b96b7" />
          </g>
        </Btn>
        <Btn>
          <g fill="none" stroke="#fff" strokeWidth="4" strokeLinejoin="round">
            <path d="M19 10l4-4q4-4 8 0l4 4q3 4 0 7l-5 5M11 19l-6 6q-3 3 0 6l5 5q3 3 6 0l5-5" />
            <path d="M5 8l27 27" strokeWidth="6" />
            <path d="M25 15l1 1M15 25l2-2" />
          </g>
        </Btn>
      </div>
      <svg className="absolute left-[111px] top-[113px]" width="12" height="14" viewBox="0 0 12 14">
        <path d="M2 7l8-5v10z" fill="#fff" stroke="#fff" strokeWidth="2" strokeLinejoin="round" />
      </svg>
    </div>
  );
}

export default function App() {
  return (
    <div className="flex h-[1080px] w-[1920px] flex-col overflow-hidden bg-[#282828] font-['Open_Sans','Noto_Sans_CJK_SC',sans-serif]">
      <TopPanel />
      <div className="flex flex-1">
        <Launcher />
        <div className="relative flex w-[1855px] flex-col">
          <Tabs />
          <AddressBar />
          <div className="mt-[31px] h-[922px] overflow-hidden">
            <div className="flex h-[922px] flex-col bg-[#efebe5] font-['DejaVu_Sans',sans-serif] blur-[0.5px] [font-kerning:none]">
              <MenuBar />
              <ToolBar />
              <div className="flex h-[749px] shrink-0 justify-between pt-[2px]">
                <Displays />
                <Viewport />
              </div>
              <TaskBar />
            </div>
          </div>
          <ControlBar />
        </div>
      </div>
    </div>
  );
}
